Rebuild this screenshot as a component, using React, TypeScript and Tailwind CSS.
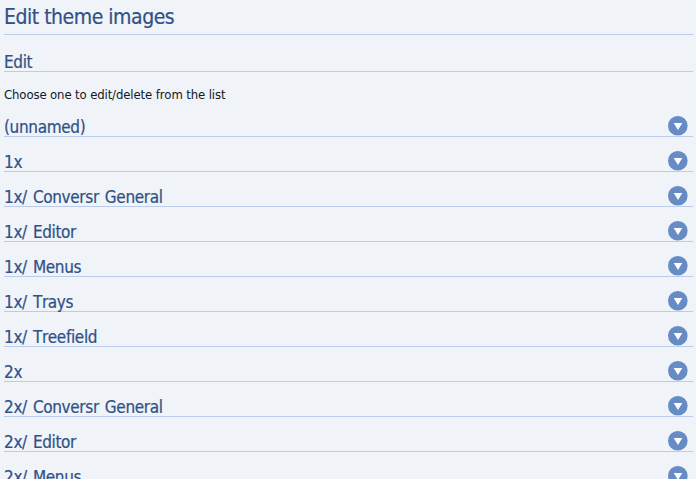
const groups = ['(unnamed)', '1x', '1x/ Conversr General', '1x/ Editor', '1x/ Menus', '1x/ Trays', '1x/ Treefield', '2x', '2x/ Conversr General', '2x/ Editor', '2x/ Menus'];

export default function App() {
  return (
    <main className="h-[479px] overflow-hidden bg-[#f0f3f8] pl-1 pr-[3px] font-['DejaVu_Sans_Condensed','DejaVu_Sans',sans-serif] text-[#2f5187] [font-kerning:none] [font-variant-ligatures:none] [-webkit-text-stroke:0.2px]">
      <h1 className="h-[35px] border-b border-[#b9cdeb] text-[21px] leading-[34px] tracking-[-0.48px] whitespace-nowrap">Edit theme images</h1>
      <h2 className="h-[37px] border-b border-[#b9cdeb] pt-[17px] text-[17px] leading-5 tracking-[-0.35px]">Edit</h2>
      <p className="h-[30px] pt-[14px] text-[13px] leading-[18px] tracking-[-0.12px] text-[#111827] [-webkit-text-stroke:0px]">Choose one to edit/delete from the list</p>
      {groups.map((name) => (
        <h2 key={name} className="flex h-[35px] items-end justify-between border-b border-[#b9cdeb] pr-[5px] text-[17px] leading-[17px] tracking-[-0.35px] [word-spacing:1.5px] whitespace-nowrap">
          <span>{name}</span>
          <svg width="20" height="20" viewBox="0 0 20 20"><circle cx="9.8" cy="9.8" r="9.8" fill="#668bc5" /><path d="M5.7 7h8.6L10 14z" fill="white" /></svg>
        </h2>
      ))}
    </main>
  );
}
